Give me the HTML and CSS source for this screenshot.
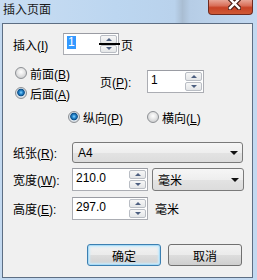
FILE: index.html
```html
<!DOCTYPE html>
<html lang="zh-CN">
<head>
    <meta charset="UTF-8">
    <title>插入页面</title>
    <link rel="stylesheet" href="styles.css">
</head>
<body>

<div class="window">
    <div class="titlebar">
        <span class="title">插入页面</span>
        <span class="close">
            <svg width="13" height="10" viewBox="0 0 13 10">
                <path d="M2 -1 L11 8 M11 -1 L2 8" stroke="#4a1e16" stroke-width="4.6" stroke-linecap="square"/>
                <path d="M2 -1 L11 8 M11 -1 L2 8" stroke="#fff" stroke-width="2.4" stroke-linecap="square"/>
            </svg>
        </span>
    </div>

    <div class="client">
        <div class="insert-row">
            <span class="lbl">插入(<u>I</u>)</span>
            <div class="spin spin-insert">
                <span class="val"><span class="sel">1</span></span>
                <span class="arrows"><span class="arr up"></span><span class="arr down"></span></span>
                <i class="glitch"></i>
            </div>
            <span class="unit-page">页</span>
        </div>

        <div class="pos-row">
            <div class="radios">
                <label class="radio"><span class="dot"></span><span>前面(<u>B</u>)</span></label>
                <label class="radio checked"><span class="dot"></span><span>后面(<u>A</u>)</span></label>
            </div>
            <div class="page-field">
                <span class="page-lbl">页(<u>P</u>):</span>
                <div class="spin spin-page">
                    <span class="val">1</span>
                    <span class="arrows"><span class="arr up"></span><span class="arr down"></span></span>
                </div>
            </div>
        </div>

        <div class="orient-row">
            <label class="radio checked"><span class="dot"></span><span>纵向(<u>P</u>)</span></label>
            <label class="radio"><span class="dot"></span><span>横向(<u>L</u>)</span></label>
        </div>

        <div class="form-row paper-row">
            <span class="flbl">纸张(<u>R</u>):</span>
            <div class="combo combo-paper"><span>A4</span><span class="caret"></span></div>
        </div>
        <div class="form-row width-row">
            <span class="flbl">宽度(<u>W</u>):</span>
            <div class="spin spin-size">
                <span class="val">210.0</span>
                <span class="arrows"><span class="arr up"></span><span class="arr down"></span></span>
            </div>
            <div class="combo combo-unit"><span>毫米</span><span class="caret"></span></div>
        </div>
        <div class="form-row height-row">
            <span class="flbl">高度(<u>E</u>):</span>
            <div class="spin spin-size">
                <span class="val">297.0</span>
                <span class="arrows"><span class="arr up"></span><span class="arr down"></span></span>
            </div>
            <span class="unit">毫米</span>
        </div>

        <div class="buttons">
            <button class="button default">确定</button>
            <button class="button">取消</button>
        </div>
    </div>
</div>

</body>
</html>
```

FILE: styles.css
```css
* {
    margin: 0;
    padding: 0;
    box-sizing: border-box;
}

body {
    font-family: "Liberation Sans", "Noto Sans CJK SC", sans-serif;
    font-size: 12px;
    color: #000;
    background: #c3d9f0;
}

u {
    text-decoration: underline;
}

.window {
    width: 257px;
    height: 280px;
    display: flex;
    flex-direction: column;
    background: #c3d9f0;
}

/* title bar */
.titlebar {
    height: 23px;
    display: flex;
    justify-content: space-between;
    align-items: flex-start;
    background: linear-gradient(to right, #c9ddf2 0%, #bcd6f0 45%, #b9d2ec 68%, #a9bdd2 71%, #b6cde6 74%, #c3d9f1 100%);
}

.title {
    padding: 3px 0 0 3px;
    line-height: 14px;
    color: #1a1a1a;
}

.close {
    width: 45px;
    height: 15px;
    margin-right: 4px;
    padding-left: 19px;
    border: 1px solid #6f2a1f;
    border-top: none;
    border-radius: 0 0 4px 4px;
    background: linear-gradient(#e8a596 0%, #d9705a 40%, #c84326 55%, #cf5a36 100%);
}

.close svg {
    display: block;
}

/* client area */
.client {
    margin: 0 4px 0 2px;
    height: 255px;
    border: 1px solid #5d6e83;
    background: #f0f0f0;
}

.insert-row {
    display: flex;
    align-items: center;
    height: 22px;
    margin: 9px 0 0 10px;
}

.lbl {
    width: 50px;
}

.unit-page {
    margin-left: 2px;
}

/* spin edits */
.spin {
    position: relative;
    display: flex;
    height: 23px;
    padding: 1px;
    border: 1px solid #abadb3;
    border-top-color: #9a9ca3;
    background: #fff;
}

.spin-insert {
    width: 56px;
    height: 22px;
}

.spin-page {
    width: 57px;
}

.spin-size {
    width: 76px;
}

.val {
    flex: 1;
    padding: 1px 0 0 2px;
    line-height: 14px;
}

.spin-insert .val {
    padding-top: 0;
}

.sel {
    display: inline-block;
    padding: 0 1px;
    line-height: 13px;
    background: #3399ff;
    color: #fff;
}

.arrows {
    width: 17px;
    display: flex;
    flex-direction: column;
    gap: 1px;
}

.arr {
    flex: 1;
    display: flex;
    align-items: center;
    justify-content: center;
    border: 1px solid #b9bdc4;
    border-radius: 2px;
    background: linear-gradient(#f7f7f7, #e4e6e8);
}

.arr::after {
    content: "";
    border-left: 3px solid transparent;
    border-right: 3px solid transparent;
}

.up::after {
    border-bottom: 3px solid #4d5f80;
}

.down::after {
    border-top: 3px solid #4d5f80;
}

.glitch {
    position: absolute;
    left: 35px;
    top: 9px;
    width: 21px;
    height: 2px;
    background: #000;
}

/* radios */
.pos-row {
    display: flex;
    margin: 8px 0 0 12px;
}

.radios {
    width: 85px;
    display: flex;
    flex-direction: column;
}

.radio {
    display: flex;
    align-items: center;
    gap: 3px;
    height: 20px;
}

.dot {
    width: 12px;
    height: 12px;
    border-radius: 50%;
    border: 1px solid #8d9094;
    background: radial-gradient(circle at 50% 40%, #ffffff 0, #e9e9e9 3px, #cfd0d2 6px);
}

.radio.checked .dot {
    background: radial-gradient(circle at 50% 45%, #8fd8ff 0, #2c8fd6 1.6px, #0b4e88 3.4px, #dfe7ee 4.2px, #cfd3d8 6px);
}

.page-field {
    display: flex;
    align-items: center;
    height: 23px;
    margin-top: 7px;
}

.page-lbl {
    width: 47px;
}

.orient-row {
    display: flex;
    height: 20px;
    margin: 4px 0 0 65px;
}

.orient-row .radio:first-child {
    width: 79px;
}

/* size fields */
.form-row {
    display: flex;
    align-items: center;
    margin-left: 10px;
}

.paper-row {
    height: 21px;
    margin-top: 15px;
}

.width-row {
    height: 23px;
    margin-top: 5px;
}

.height-row {
    height: 23px;
    margin-top: 6px;
}

.flbl {
    width: 59px;
}

.combo {
    height: 100%;
    display: flex;
    align-items: center;
    justify-content: space-between;
    padding: 0 4px 0 5px;
    border: 1px solid #7a7a7a;
    border-radius: 3px;
    background: linear-gradient(#f6f6f6 0%, #eeeeee 50%, #e3e3e3 51%, #dcdcdc 100%);
}

.combo-paper {
    width: 171px;
}

.combo-unit {
    width: 92px;
    margin-left: 4px;
}

.caret {
    border-left: 4px solid transparent;
    border-right: 4px solid transparent;
    border-top: 4px solid #111;
}

.unit {
    margin-left: 7px;
}

/* buttons */
.buttons {
    display: flex;
    justify-content: flex-end;
    gap: 7px;
    margin-top: 24px;
    padding-right: 10px;
}

.button {
    width: 74px;
    height: 22px;
    font-family: inherit;
    font-size: 12px;
    color: #000;
    border: 1px solid #707070;
    border-radius: 3px;
    background: linear-gradient(#f2f2f2 0%, #ebebeb 50%, #dddddd 51%, #cfcfcf 100%);
}

.button.default {
    border-color: #3c7fb1;
    box-shadow: inset 0 0 0 1px #a9dbf6, inset 0 0 2px 2px #cbeafb;
}
```
